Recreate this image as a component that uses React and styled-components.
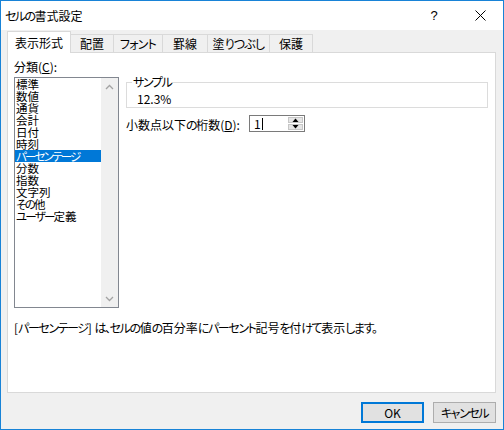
import React from "react";
import styled, { createGlobalStyle } from "styled-components";

const Global = createGlobalStyle`
  html, body { margin: 0; padding: 0; background: #ffffff; }
  body {
    font-family: "Noto Sans CJK JP", "Noto Sans", sans-serif;
    font-size: 12px;
    color: #000000;
  }
  * { box-sizing: border-box; }
`;

const Kana = styled.span`
  letter-spacing: ${(p) => p.$ls ?? -1.4}px;
`;

const KANA_RE = /([\u3001\u3002\u3040-\u30ff]+)/;

const Jp = ({ children, ls }) => {
  const parts = String(children).split(KANA_RE);
  return (
    <>
      {parts.map((part, i) =>
        KANA_RE.test(part) ? (
          <Kana key={i} $ls={ls}>
            {part}
          </Kana>
        ) : (
          <React.Fragment key={i}>{part}</React.Fragment>
        )
      )}
    </>
  );
};

const Window = styled.div`
  width: 504px;
  height: 430px;
  border: 1px solid #1883d7;
  background: #f0f0f0;
  display: flex;
  flex-direction: column;
  font-feature-settings: "palt";
`;

const TitleBar = styled.div`
  height: 29px;
  background: #ffffff;
  display: flex;
  align-items: center;
`;

const Title = styled.div`
  flex: 1;
  padding-left: 4px;
  font-size: 12px;
  line-height: 12px;
  padding-top: 1px;
`;

const CaptionButton = styled.div`
  width: 46px;
  height: 29px;
  display: flex;
  align-items: center;
  justify-content: center;
  font-family: "Liberation Sans", sans-serif;
  font-size: 13px;
`;

const Body = styled.div`
  flex: 1;
  display: flex;
  flex-direction: column;
  padding: 0 7px 0 6px;
`;

const TabStrip = styled.div`
  margin-top: 1px;
  height: 21px;
  display: flex;
  align-items: flex-end;
`;

const Tab = styled.div`
  position: relative;
  width: ${(p) => p.$w}px;
  height: ${(p) => (p.$active ? 22 : 18)}px;
  margin-bottom: ${(p) => (p.$active ? -1 : 0)}px;
  margin-left: ${(p) => (p.$first ? 0 : -1)}px;
  z-index: ${(p) => (p.$active ? 2 : 1)};
  background: ${(p) => (p.$active ? "#ffffff" : "#f0f0f0")};
  border: 1px solid #d9d9d9;
  border-bottom: none;
  display: flex;
  align-items: center;
  justify-content: center;
  font-size: 12px;
  line-height: 12px;
  padding-top: ${(p) => (p.$active ? 0 : 1)}px;
  white-space: nowrap;
`;

const Panel = styled.div`
  height: 341px;
  background: #ffffff;
  border: 1px solid #d9d9d9;
  padding: 0 7px 0 6px;
  display: flex;
  flex-direction: column;
`;

const Columns = styled.div`
  display: grid;
  grid-template-columns: 105px 362px;
  column-gap: 7px;
`;

const LeftCol = styled.div`
  padding-top: 8px;
  display: flex;
  flex-direction: column;
`;

const Label = styled.div`
  font-size: 12px;
  line-height: 12px;
  height: 12px;
  white-space: nowrap;
  u { text-decoration: underline; text-underline-offset: 1px; }
`;

const ListLabel = styled(Label)`
  margin-bottom: 4px;
`;

const ListBox = styled.div`
  width: 105px;
  height: 231px;
  border: 1px solid #828790;
  display: flex;
`;

const Items = styled.div`
  flex: 1;
`;

const Item = styled.div`
  height: 12px;
  line-height: 12px;
  font-size: 11.5px;
  padding-left: 1px;
  white-space: nowrap;
  background: ${(p) => (p.$selected ? "#0078d7" : "transparent")};
  color: ${(p) => (p.$selected ? "#ffffff" : "#000000")};
`;

const ScrollBar = styled.div`
  width: 17px;
  background: #f0f0f0;
  display: flex;
  flex-direction: column;
  justify-content: space-between;
`;

const ScrollButton = styled.div`
  width: 17px;
  height: 17px;
  display: flex;
  align-items: center;
  justify-content: center;
`;

const RightCol = styled.div`
  padding-top: 23px;
  display: flex;
  flex-direction: column;
`;

const SampleBox = styled.fieldset`
  margin: 0;
  padding: 5px 10px 2px 10px;
  border: 1px solid #dcdcdc;
  min-width: 0;
`;

const SampleLegend = styled.legend`
  padding: 0 1px;
  margin-left: -5px;
  font-size: 12px;
  line-height: 12px;
`;

const SampleValue = styled.div`
  font-size: 12px;
  line-height: 12px;
  height: 12px;
`;

const DecimalRow = styled.div`
  margin-top: 7px;
  display: flex;
  align-items: center;
`;

const DecimalLabel = styled(Label)`
  width: 123px;
  padding-top: 1px;
`;

const SpinBox = styled.div`
  width: 56px;
  height: 17px;
  border: 1px solid #7a7a7a;
  background: #ffffff;
  display: flex;
  align-items: stretch;
`;

const SpinText = styled.div`
  flex: 1;
  display: flex;
  align-items: center;
  padding-left: 4px;
  font-size: 12px;
  line-height: 12px;
`;

const Caret = styled.span`
  display: inline-block;
  width: 1px;
  height: 12px;
  background: #000000;
  margin-left: 1px;
`;

const SpinButtons = styled.div`
  width: 16px;
  padding: 1px 1px 1px 0;
  display: flex;
  flex-direction: column;
  gap: 1px;
`;

const SpinButton = styled.div`
  flex: 1;
  background: #e5e5e5;
  border: 1px solid #c6c6c6;
  display: flex;
  align-items: center;
  justify-content: center;
`;

const Description = styled.div`
  margin-top: 14px;
  font-size: 12px;
  line-height: 12px;
  white-space: nowrap;
`;

const Footer = styled.div`
  padding-top: 9px;
  display: flex;
  justify-content: flex-end;
  gap: 9px;
`;

const Button = styled.div`
  width: 63px;
  height: 21px;
  background: #e1e1e1;
  border: ${(p) => (p.$default ? "2px solid #0078d7" : "1px solid #adadad")};
  display: flex;
  align-items: center;
  justify-content: center;
  font-size: 12px;
  line-height: 12px;
`;

const Chevron = ({ up }) => (
  <svg width="9" height="6" viewBox="0 0 9 6">
    <polyline
      points={up ? "1,5 4.5,1.5 8,5" : "1,1 4.5,4.5 8,1"}
      fill="none"
      stroke="#a3a3a3"
      strokeWidth="1.3"
    />
  </svg>
);

const Triangle = ({ up }) => (
  <svg width="7" height="4" viewBox="0 0 7 4">
    <polygon points={up ? "0.5,4 3.5,0.5 6.5,4" : "0.5,0 3.5,3.5 6.5,0"} fill="#000" />
  </svg>
);

const CloseIcon = () => (
  <svg width="11" height="11" viewBox="0 0 11 11">
    <path d="M0.5 0.5 L10.5 10.5 M10.5 0.5 L0.5 10.5" stroke="#000" strokeWidth="1" />
  </svg>
);

const tabs = [
  { label: "表示形式", w: 64 },
  { label: "配置", w: 44 },
  { label: "フォント", w: 50 },
  { label: "罫線", w: 46 },
  { label: "塗りつぶし", w: 63 },
  { label: "保護", w: 44 },
];

const categories = [
  "標準",
  "数値",
  "通貨",
  "会計",
  "日付",
  "時刻",
  "パーセンテージ",
  "分数",
  "指数",
  "文字列",
  "その他",
  "ユーザー定義",
];

export default function App() {
  return (
    <>
      <Global />
      <Window>
        <TitleBar>
          <Title>
            <Jp ls={-1.6}>セルの書式設定</Jp>
          </Title>
          <CaptionButton>?</CaptionButton>
          <CaptionButton>
            <CloseIcon />
          </CaptionButton>
        </TitleBar>
        <Body>
          <TabStrip>
            {tabs.map((t, i) => (
              <Tab key={t.label} $w={t.w} $active={i === 0} $first={i === 0}>
                <Jp ls={-0.8}>{t.label}</Jp>
              </Tab>
            ))}
          </TabStrip>
          <Panel>
            <Columns>
              <LeftCol>
                <ListLabel>
                  分類(<u>C</u>):
                </ListLabel>
                <ListBox>
                  <Items>
                    {categories.map((c) => (
                      <Item key={c} $selected={c === "パーセンテージ"}>
                        <Jp ls={-1.8}>{c}</Jp>
                      </Item>
                    ))}
                  </Items>
                  <ScrollBar>
                    <ScrollButton>
                      <Chevron up />
                    </ScrollButton>
                    <ScrollButton>
                      <Chevron />
                    </ScrollButton>
                  </ScrollBar>
                </ListBox>
              </LeftCol>
              <RightCol>
                <SampleBox>
                  <SampleLegend>
                    <Jp>サンプル</Jp>
                  </SampleLegend>
                  <SampleValue>12.3%</SampleValue>
                </SampleBox>
                <DecimalRow>
                  <DecimalLabel>
                    <Jp>小数点以下の桁数</Jp>(<u>D</u>):
                  </DecimalLabel>
                  <SpinBox>
                    <SpinText>
                      1<Caret />
                    </SpinText>
                    <SpinButtons>
                      <SpinButton>
                        <Triangle up />
                      </SpinButton>
                      <SpinButton>
                        <Triangle />
                      </SpinButton>
                    </SpinButtons>
                  </SpinBox>
                </DecimalRow>
              </RightCol>
            </Columns>
            <Description>
              <Jp>[パーセンテージ] は、セルの値の百分率にパーセント記号を付けて表示します。</Jp>
            </Description>
          </Panel>
          <Footer>
            <Button $default>OK</Button>
            <Button>
              <Jp>キャンセル</Jp>
            </Button>
          </Footer>
        </Body>
      </Window>
    </>
  );
}
